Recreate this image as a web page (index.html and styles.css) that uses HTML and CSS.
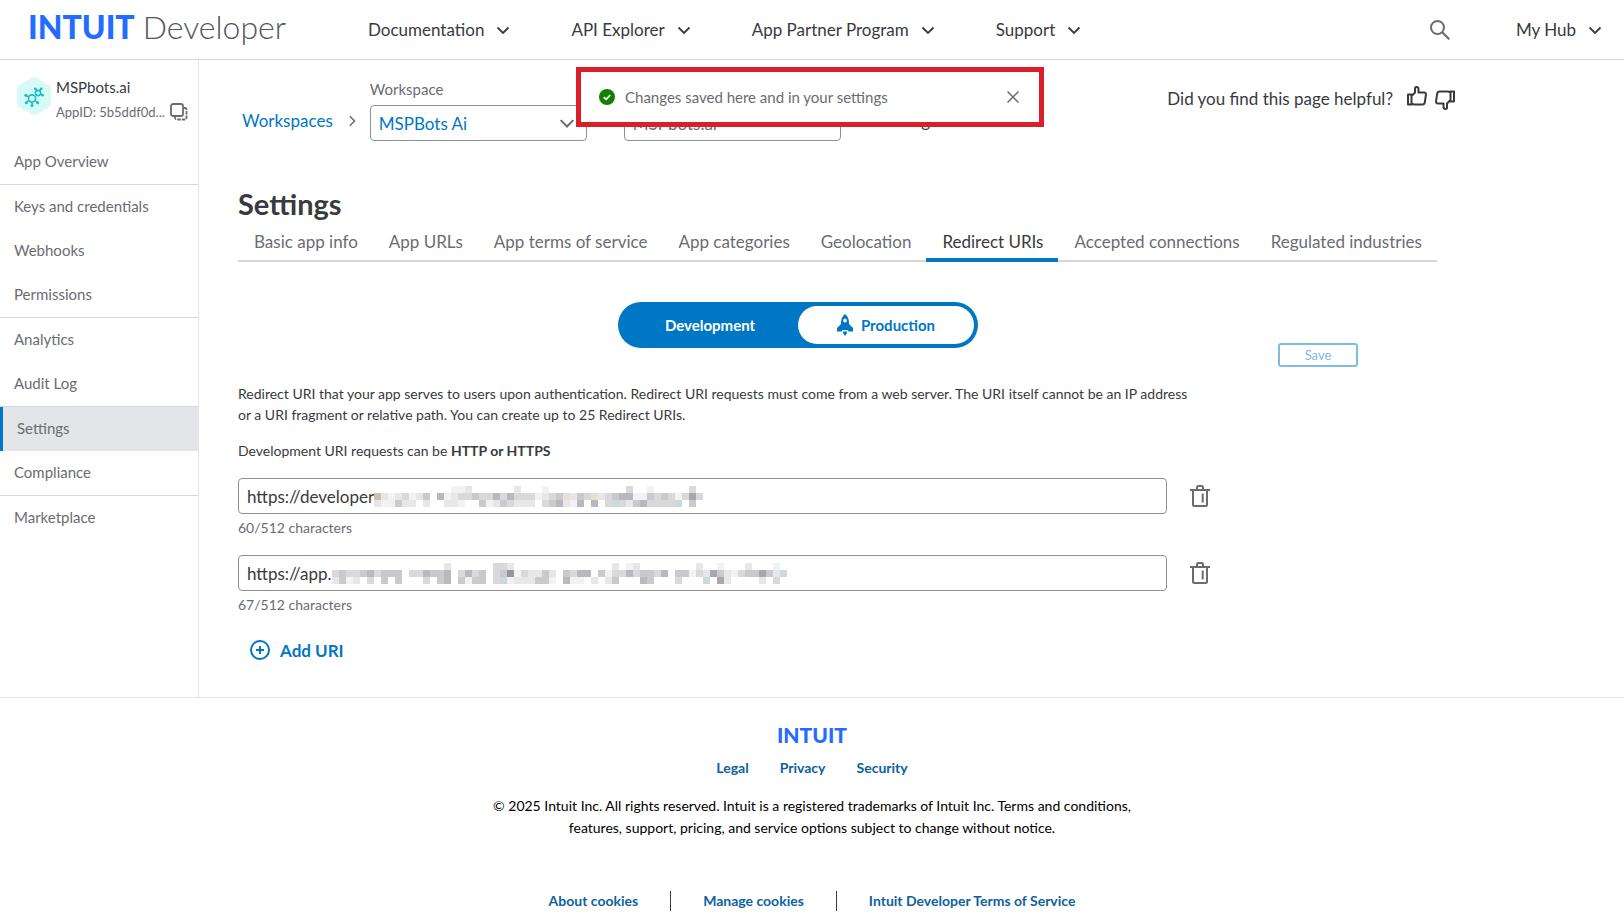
FILE: index.html
```
<!DOCTYPE html>
<html lang="en">
<head>
    <meta charset="UTF-8">
    <meta name="viewport" content="width=device-width, initial-scale=1.0">
    <title>Settings - Intuit Developer</title>
    <link rel="stylesheet" href="styles.css">
</head>
<body>

<!-- shared icons -->
<svg class="sprite" aria-hidden="true">
    <symbol id="chevron" viewBox="0 0 14 14">
        <path d="M1.5 4.5 L7 10 L12.5 4.5" fill="none" stroke="currentColor" stroke-width="1.800"/>
    </symbol>
    <symbol id="trash" viewBox="0 0 20 22">
        <path d="M0 5H20M3 5V19.5Q3 21 4.5 21H15.5Q17 21 17 19.5V5M7 5V2.5Q7 1 8.5 1H11.5Q13 1 13 2.5V5M12.7 8.5V17.5" fill="none" stroke="currentColor" stroke-width="2"/>
    </symbol>
    <symbol id="thumb" viewBox="0 0 20 20">
        <path d="M1 8.5H4.5V18.5H1ZM4.5 10L8 6.5V2.5Q8 1 9.5 1Q11.5 1 11.5 3.2V6.5H17Q19.2 6.5 18.9 8.8L17.8 16.3Q17.5 18.5 15.3 18.5H7.5Q5.8 18.5 4.5 17.5" fill="none" stroke="currentColor" stroke-width="2" stroke-linejoin="round"/>
    </symbol>
</svg>

<header class="header">
    <a class="logo" href="#"><strong>INTUIT</strong> <span>Developer</span></a>
    <nav class="top-nav">
        <button type="button">Documentation <svg class="chevron"><use href="#chevron"/></svg></button>
        <button type="button">API Explorer <svg class="chevron"><use href="#chevron"/></svg></button>
        <button type="button">App Partner Program <svg class="chevron"><use href="#chevron"/></svg></button>
        <button type="button">Support <svg class="chevron"><use href="#chevron"/></svg></button>
    </nav>
    <div class="top-tools">
        <button type="button" aria-label="Search">
            <svg class="search-icon" viewBox="0 0 20 20"><circle cx="7.5" cy="7.5" r="6.5" fill="none" stroke="currentColor" stroke-width="2"/><path d="M12 12L19.3 19.3" stroke="currentColor" stroke-width="2.2"/></svg>
        </button>
        <button type="button">My Hub <svg class="chevron"><use href="#chevron"/></svg></button>
    </div>
</header>

<div class="toast" role="status">
    <svg class="toast-icon" viewBox="0 0 16 16"><circle cx="8" cy="8" r="8" fill="#108000"/><path d="M4.8 8.2L7.2 10.3L11.2 6" fill="none" stroke="#fff" stroke-width="1.8"/></svg>
    <span>Changes saved here and in your settings</span>
    <button type="button" aria-label="Close">
        <svg class="close-icon" viewBox="0 0 12 12"><path d="M0.5 0.5L11.5 11.5M11.5 0.5L0.5 11.5" stroke="currentColor" stroke-width="1.5"/></svg>
    </button>
</div>

<div class="page">
    <aside class="sidebar">
        <div class="app-info">
            <svg class="app-icon" viewBox="0 0 34 38">
                <path d="M17 0Q18 0 19 0.6L32 8Q34 9.3 34 11.5V26.5Q34 28.7 32 30L19 37.4Q17 38.5 15 37.4L2 30Q0 28.7 0 26.5V11.5Q0 9.3 2 8L15 0.6Q16 0 17 0Z" fill="#d8faf7"/>
                <g fill="none" stroke="#14bfcb" stroke-width="1.6">
                    <circle cx="15" cy="21.5" r="3.6"/>
                    <circle cx="21" cy="16" r="2.6"/>
                    <path d="M11.8 19.8L9 18.5M12 23.5L9.5 25.5M15 25V28.5M18 23.5L20.5 25.5M19.5 13.8L18.5 12M22.5 13.8L24 12M23.5 17L25.5 18"/>
                </g>
                <g fill="#14bfcb"><circle cx="8.8" cy="18.3" r="1.5"/><circle cx="9.3" cy="25.7" r="1.5"/><circle cx="15" cy="28.5" r="1.5"/><circle cx="20.7" cy="25.7" r="1.5"/><circle cx="18.3" cy="11.8" r="1.4"/><circle cx="24.2" cy="11.8" r="1.4"/><circle cx="25.5" cy="18.2" r="1.4"/></g>
            </svg>
            <div class="app-text">
                <div class="app-name">MSPbots.ai</div>
                <div class="app-id">AppID: 5b5ddf0d...
                    <button type="button" aria-label="Copy app ID">
                        <svg class="copy-icon" viewBox="0 0 18 18"><g fill="none" stroke="currentColor" stroke-width="1.8"><rect x="1" y="1" width="12" height="12" rx="2"/><path d="M14 5H15Q16.5 5 16.5 6.5V15Q16.5 16.5 15 16.5H6.500Q5 16.5 5 14" stroke-dasharray="3.5 1"/></g></svg>
                    </button>
                </div>
            </div>
        </div>
        <nav class="side-nav">
            <ul>
                <li><a href="#">App Overview</a></li>
            </ul>
            <ul>
                <li><a href="#">Keys and credentials</a></li>
                <li><a href="#">Webhooks</a></li>
                <li><a href="#">Permissions</a></li>
            </ul>
            <ul>
                <li><a href="#">Analytics</a></li>
                <li><a href="#">Audit Log</a></li>
            </ul>
            <ul>
                <li><a class="active" href="#">Settings</a></li>
                <li><a href="#">Compliance</a></li>
            </ul>
            <ul>
                <li><a href="#">Marketplace</a></li>
            </ul>
        </nav>
    </aside>

    <main class="main">
        <div class="crumbs">
            <a class="crumb-link" href="#">Workspaces</a>
            <svg class="crumb-arrow"><use href="#chevron"/></svg>
            <div class="picker">
                <label for="workspace">Workspace</label>
                <div class="select-box">
                    <select id="workspace"><option>MSPBots Ai</option></select>
                    <svg class="select-arrow"><use href="#chevron"/></svg>
                </div>
            </div>
            <svg class="crumb-arrow"><use href="#chevron"/></svg>
            <div class="select-box select-app">
                <select aria-label="App"><option>MSPbots.ai</option></select>
            </div>
            <svg class="crumb-arrow"><use href="#chevron"/></svg>
            <span class="crumb-current">Settings</span>
            <div class="feedback">
                <span>Did you find this page helpful?</span>
                <button type="button" aria-label="Yes"><svg class="thumb"><use href="#thumb"/></svg></button>
                <button type="button" aria-label="No"><svg class="thumb thumb-down"><use href="#thumb"/></svg></button>
            </div>
        </div>

        <h1>Settings</h1>
        <nav class="tabs">
            <a href="#">Basic app info</a>
            <a href="#">App URLs</a>
            <a href="#">App terms of service</a>
            <a href="#">App categories</a>
            <a href="#">Geolocation</a>
            <a class="active" href="#">Redirect URIs</a>
            <a href="#">Accepted connections</a>
            <a href="#">Regulated industries</a>
        </nav>

        <div class="controls">
            <div class="toggle">
                <button type="button" class="toggle-dev">Development</button>
                <button type="button" class="toggle-prod">
                    <svg class="rocket" viewBox="0 0 16 22"><path fill-rule="evenodd" d="M8 0Q12 3.5 12 8.5V10L16 14V17.5H11.5L10.5 16H5.5L4.5 17.5H0V14L4 10V8.5Q4 3.5 8 0ZM8 4.5A1.8 2 0 1 0 8 8.5A1.8 2 0 1 0 8 4.5ZM6 17.5H10L9.8 19.5L8 22L6.2 19.5Z" fill="currentColor"/></svg>
                    Production
                </button>
            </div>
            <button type="button" class="save" disabled>Save</button>
        </div>

        <p class="intro">Redirect URI that your app serves to users upon authentication. Redirect URI requests must come from a web server. The URI itself cannot be an IP address or a URI fragment or relative path. You can create up to 25 Redirect URIs.</p>
        <p class="rule">Development URI requests can be <strong>HTTP or HTTPS</strong></p>

        <div class="uri">
            <div class="uri-row">
                <div class="uri-field">
                    <input type="text" aria-label="Redirect URI 1" aria-describedby="count1" value="https://developer">
                    <svg class="mask mask-first" id="mask1"></svg>
                </div>
                <button type="button" aria-label="Delete"><svg class="trash"><use href="#trash"/></svg></button>
            </div>
            <div class="count" id="count1">60/512 characters</div>
        </div>
        <div class="uri">
            <div class="uri-row">
                <div class="uri-field">
                    <input type="text" aria-label="Redirect URI 2" aria-describedby="count2" value="https://app.">
                    <svg class="mask mask-second" id="mask2"></svg>
                </div>
                <button type="button" aria-label="Delete"><svg class="trash"><use href="#trash"/></svg></button>
            </div>
            <div class="count" id="count2">67/512 characters</div>
        </div>

        <button type="button" class="add">
            <svg class="add-icon" viewBox="0 0 20 20"><circle cx="10" cy="10" r="9" fill="none" stroke="currentColor" stroke-width="2"/><path d="M10 6V14M6 10H14" stroke="currentColor" stroke-width="2"/></svg>
            Add URI
        </button>
    </main>
</div>

<footer class="footer">
    <div class="footer-logo">INTUIT</div>
    <nav class="legal">
        <a href="#">Legal</a>
        <a href="#">Privacy</a>
        <a href="#">Security</a>
    </nav>
    <p>© 2025 Intuit Inc. All rights reserved. Intuit is a registered trademarks of Intuit Inc. Terms and conditions, features, support, pricing, and service options subject to change without notice.</p>
    <nav class="policies">
        <a href="#">About cookies</a>
        <a href="#">Manage cookies</a>
        <a href="#">Intuit Developer Terms of Service</a>
    </nav>
</footer>

<script src="mask.js"></script>
</body>
</html>
```
FILE: styles.css
```
* {
    box-sizing: border-box;
}

body {
    margin: 0;
    font-family: Lato, 'Liberation Sans', sans-serif;
    font-size: 17px;
    color: #393a3d;
    background-color: #fff;
    position: relative;
}

a {
    color: #0077c5;
    text-decoration: none;
}

button {
    display: flex;
    align-items: center;
    padding: 0;
    border: none;
    background: none;
    font: inherit;
    color: inherit;
    cursor: pointer;
}

svg {
    display: block;
    flex-shrink: 0;
}

.sprite {
    position: absolute;
    width: 0;
    height: 0;
}

/* header */
.header {
    display: flex;
    align-items: center;
    height: 60px;
    padding: 0 22px 0 28px;
    border-bottom: 1px solid #d4d7dc;
}

.logo {
    display: flex;
    gap: 8px;
    width: 340px;
    padding-bottom: 6px;
    font-size: 32px;
    line-height: 36px;
}

.logo strong {
    font-weight: 900;
    color: #236cff;
}

.logo span {
    font-weight: 300;
    color: #53565b;
}

.top-nav {
    display: flex;
    gap: 61px;
}

.top-nav button,
.top-tools button {
    gap: 12px;
}

.chevron {
    width: 14px;
    height: 14px;
}

.top-tools {
    display: flex;
    align-items: center;
    gap: 66px;
    margin-left: auto;
}

.search-icon {
    width: 20px;
    height: 20px;
    color: #6b6c72;
}

/* toast */
.toast {
    position: absolute;
    top: 67px;
    left: 0;
    right: 4px;
    z-index: 2;
    display: flex;
    align-items: center;
    gap: 10px;
    width: 468px;
    height: 60px;
    margin: 0 auto;
    padding: 0 20px 0 18px;
    border: 5px solid #db1f29;
    background-color: #fff;
    font-size: 15px;
    color: #6b6c72;
}

.toast button {
    margin-left: auto;
}

.toast-icon {
    width: 16px;
    height: 16px;
}

.close-icon {
    width: 12px;
    height: 12px;
}

/* layout */
.page {
    display: flex;
    border-bottom: 1px solid #e3e5e8;
}

.sidebar {
    width: 199px;
    flex-shrink: 0;
    border-right: 1px solid #e3e5e8;
}

.app-info {
    display: flex;
    gap: 5px;
    height: 80px;
    padding: 17px 0 0 17px;
}

.app-icon {
    width: 34px;
    height: 38px;
}

.app-name {
    font-size: 15px;
    line-height: 20px;
}

.app-id {
    display: flex;
    align-items: center;
    gap: 5px;
    margin-top: 5px;
    font-size: 13px;
    line-height: 20px;
    color: #6b6c72;
    white-space: nowrap;
}

.copy-icon {
    width: 18px;
    height: 18px;
}

.side-nav ul {
    margin: 0;
    padding: 0;
    list-style: none;
}

.side-nav ul + ul {
    border-top: 1px solid #d4d7dc;
}

.side-nav a {
    display: block;
    padding: 0 0 2px 14px;
    font-size: 15px;
    line-height: 42px;
    color: #6b6c72;
}

.side-nav .active {
    border-left: 3px solid #0077c5;
    background-color: #e3e5e8;
}

.main {
    flex: 1;
    min-width: 0;
    padding: 20px 39px 35px;
}

/* breadcrumbs */
.crumbs {
    display: flex;
    align-items: flex-end;
}

.crumb-link,
.crumb-current {
    line-height: 40px;
}

.crumb-link {
    padding-left: 4px;
}

.crumb-arrow {
    width: 12px;
    height: 12px;
    margin: 0 12px 14px 13px;
    transform: rotate(-90deg);
    color: #6b6c72;
}

.picker label {
    display: block;
    margin-bottom: 7px;
    font-size: 15px;
    line-height: 18px;
    color: #6b6c72;
}

.select-box {
    position: relative;
    width: 217px;
}

.select-box select {
    width: 100%;
    height: 36px;
    padding: 0 8px;
    border: 1px solid #8d9096;
    border-radius: 4px;
    appearance: none;
    background-color: #fff;
    font: inherit;
    color: #0077c5;
}

.select-app select {
    color: #6b6c72;
}

.select-arrow {
    position: absolute;
    top: 10px;
    right: 12px;
    width: 16px;
    height: 16px;
    color: #6b6c72;
}

.feedback {
    display: flex;
    align-self: flex-start;
    align-items: center;
    gap: 8px;
    height: 36px;
    margin-left: auto;
    margin-right: 130px;
}

.feedback span {
    margin-right: 6px;
}

.thumb {
    width: 20px;
    height: 20px;
    margin-bottom: 4px;
}

.thumb-down {
    margin: 4px 0 0;
    transform: rotate(180deg);
}

/* settings */
h1 {
    margin: 45px 0 0;
    font-size: 29px;
    line-height: 36px;
}

.tabs {
    display: flex;
    max-width: 1199px;
    box-shadow: inset 0 -2px #d4d7dc;
}

.tabs a {
    padding: 4px 15px 0 16px;
    border-bottom: 4px solid transparent;
    line-height: 32px;
    color: #6b6c72;
    white-space: nowrap;
}

.tabs .active {
    border-color: #0077c5;
    color: #393a3d;
}

.controls {
    display: grid;
    grid-template-columns: 1fr auto 1fr;
    max-width: 1120px;
    height: 65px;
    margin: 40px 0 16px;
}

.toggle {
    grid-column: 2;
    display: flex;
    width: 360px;
    height: 46px;
    padding: 4px;
    border-radius: 23px;
    background-color: #0077c5;
    font-size: 15px;
    font-weight: 700;
}

.toggle button {
    flex: 1;
    justify-content: center;
    gap: 8px;
    border-radius: 19px;
}

.toggle-dev {
    color: #fff;
}

.toggle-prod {
    background-color: #fff;
    color: #0077c5;
}

.rocket {
    width: 16px;
    height: 22px;
}

.save {
    justify-self: end;
    align-self: end;
    justify-content: center;
    width: 80px;
    height: 24px;
    border: 2px solid #80bbe2;
    border-radius: 3px;
    font-size: 13px;
    color: #80bbe2;
}

.intro {
    max-width: 960px;
    margin: 0 0 16px;
    font-size: 14px;
    line-height: 21px;
}

.rule {
    margin: 0 0 17px;
    font-size: 14px;
    line-height: 20px;
}

.uri {
    margin-bottom: 17px;
}

.uri-row {
    display: flex;
    align-items: center;
    gap: 23px;
    max-width: 972px;
}

.uri-field {
    position: relative;
    flex: 1;
}

.uri-field input {
    display: block;
    width: 100%;
    height: 36px;
    padding: 0 8px;
    border: 1px solid #8d9096;
    border-radius: 4px;
    font: inherit;
    color: #393a3d;
}

.mask {
    position: absolute;
    top: 8px;
    height: 21px;
    background-color: #fff;
}

.mask-first {
    left: 136px;
}

.mask-second {
    left: 94px;
}

.trash {
    width: 20px;
    height: 22px;
    color: #6b6c72;
}

.count {
    margin-top: 4px;
    font-size: 14px;
    line-height: 20px;
    color: #6b6c72;
}

.add {
    gap: 10px;
    height: 24px;
    margin: 23px 0 0 12px;
    font-weight: 700;
    color: #0077c5;
}

.add-icon {
    width: 20px;
    height: 20px;
}

/* footer */
.footer {
    display: flex;
    flex-direction: column;
    align-items: center;
    padding: 25px 0 8px;
    font-size: 14px;
    color: #000;
    text-align: center;
}

.footer a {
    font-weight: 700;
    color: #0d629e;
}

.footer-logo {
    font-size: 21px;
    font-weight: 900;
    line-height: 24px;
    color: #236cff;
}

.legal {
    display: flex;
    gap: 31px;
    margin: 11px 0 17px;
    line-height: 20px;
}

.footer p {
    max-width: 660px;
    margin: 0;
    line-height: 22px;
}

.policies {
    display: flex;
    margin-top: 52px;
    line-height: 20px;
}

.policies a + a {
    margin-left: 32px;
    padding-left: 32px;
    border-left: 1px solid #393a3d;
}
```
FILE: mask.js
```
// Pixelated cover over the private part of each URI.
// Every character is one 7px cell, "." is empty.
const CELL = 7;
const SHADES = {
    1: '#f2f2f4', 2: '#e7e7ea', 3: '#d9d9dc', 4: '#cacace',
    5: '#b9b8be', 6: '#a8a7ad', 7: '#96969a',
    t: '#cbbfae', c: '#e8e0d4', b: '#cbd9df'
};

function drawMask(id, rows) {
    const svg = document.getElementById(id);
    svg.style.width = (rows[1].length * CELL) + 'px';
    rows.forEach((row, y) => {
        [...row].forEach((key, x) => {
            if (key === '.') return;
            const rect = document.createElementNS('http://www.w3.org/2000/svg', 'rect');
            rect.setAttribute('x', x * CELL);
            rect.setAttribute('y', y * CELL);
            rect.setAttribute('width', CELL);
            rect.setAttribute('height', CELL);
            rect.setAttribute('fill', SHADES[key]);
            svg.appendChild(rect);
        });
    });
}

drawMask('mask1', [
    '...........112......2...1...........3..1.....3.',
    't2123124.512334335353331234c243c234551143431363',
    '211422.2..221..41243222.345215.5.3b32453333b.4.'
]);

drawMask('mask2', [
    '................2......332..............2.12........2..1...2...1.',
    '3433453444.335445.3534.347132242.4355.4133534435.441326421344642b',
    '2412.3.4.4...3.45.4144.3b1222441.511.2.24...54...3...b.62....2.3.'
]);
```
